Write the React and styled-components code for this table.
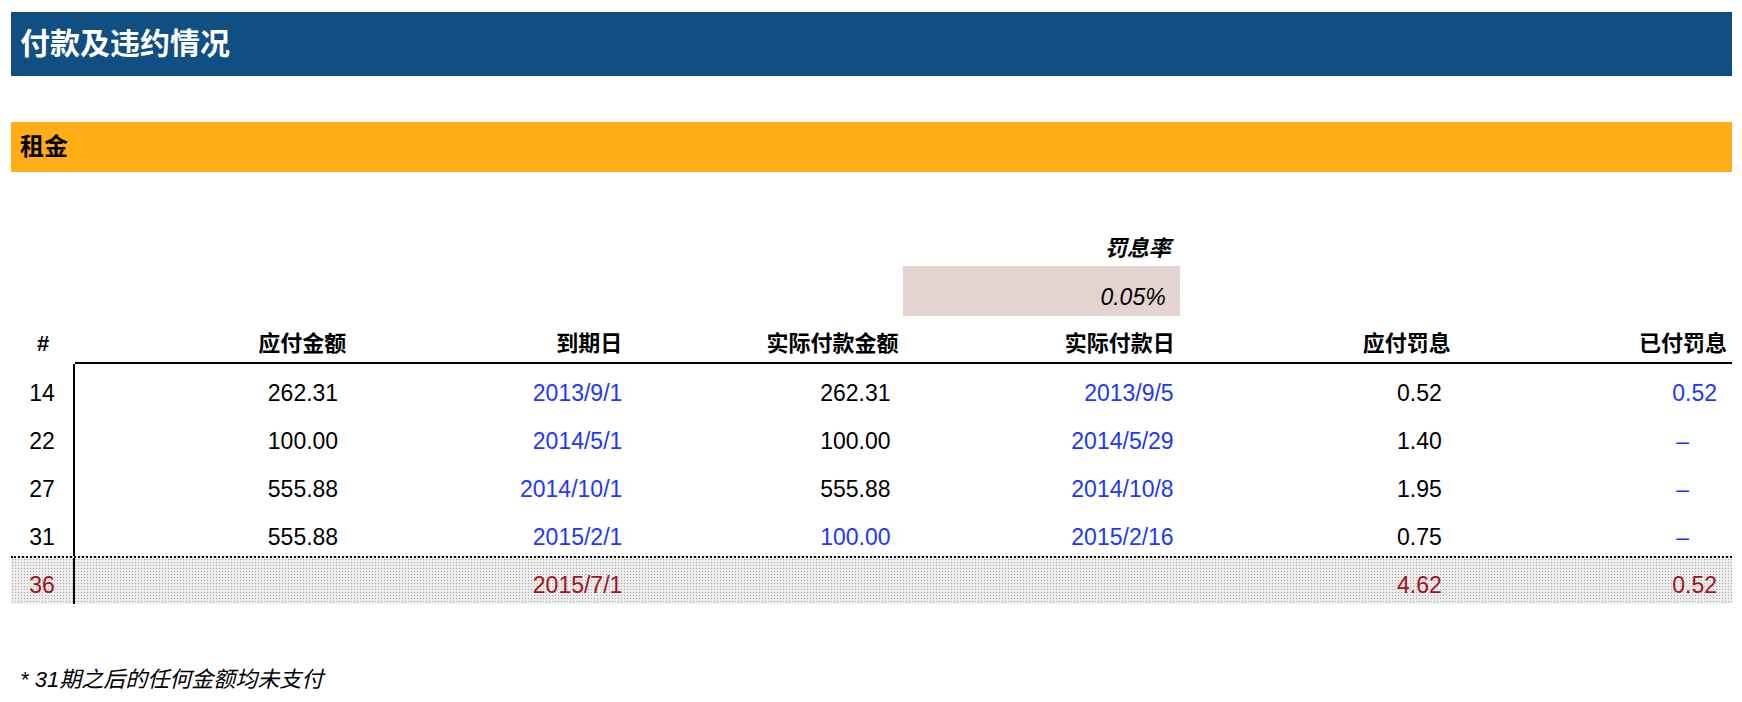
import React from "react";
import styled, { createGlobalStyle } from "styled-components";

const Global = createGlobalStyle`
  html, body { margin: 0; padding: 0; background: #ffffff; }
  body {
    font-family: "Liberation Sans", "Noto Sans CJK SC", sans-serif;
    color: #000;
  }
`;

const Page = styled.div`
  padding: 12px 10px 0 11px;
  width: 1721px;
`;

const TitleBar = styled.div`
  height: 64px;
  background: #114f82;
  display: flex;
  align-items: center;
  padding-left: 9px;
  color: #ffffff;
  font-size: 30px;
  font-weight: 700;
  line-height: 1;
`;

const SectionBar = styled.div`
  margin-top: 46px;
  height: 50px;
  background: #ffae18;
  display: flex;
  align-items: center;
  padding-left: 9px;
  font-size: 24px;
  font-weight: 700;
  line-height: 1;
`;

const Table = styled.div`
  margin-top: 56px;
  display: flex;
  flex-direction: column;
`;

const Row = styled.div`
  display: grid;
  grid-template-columns: 64px repeat(6, 1fr);
  height: ${(p) => p.$h}px;
  ${(p) =>
    p.$total &&
    `
    border-top: 2px dotted #111;
    background-color: #ececec;
    background-image: radial-gradient(circle, #a9a9a9 0.7px, transparent 0.9px);
    background-size: 3px 3px;
  `}
`;

const Cell = styled.div`
  display: flex;
  align-items: flex-end;
  justify-content: ${(p) => (p.$center ? "center" : "flex-end")};
  padding-right: ${(p) => (p.$center ? 0 : p.$pr ?? 5)}px;
  padding-bottom: ${(p) => p.$pb ?? 6}px;
  font-size: ${(p) => (p.$bold ? 22 : 23)}px;
  line-height: 26px;
  white-space: nowrap;
  font-weight: ${(p) => (p.$bold ? 700 : 400)};
  font-style: ${(p) => (p.$italic ? "italic" : "normal")};
  color: ${(p) =>
    p.$tone === "blue" ? "#1d38f6" : p.$tone === "red" ? "#a3121f" : "#000"};
  background: ${(p) => (p.$fill ? "#e3d3d1" : "transparent")};
  border-bottom: ${(p) => (p.$underline ? "2px solid #000" : "none")};
  border-right: ${(p) => (p.$divider ? "2px solid #000" : "none")};
  box-sizing: border-box;
`;

const Footnote = styled.div`
  margin-top: 63px;
  padding-left: 9px;
  font-size: 22px;
  line-height: 26px;
  font-style: italic;
`;

const headers = ["应付金额", "到期日", "实际付款金额", "实际付款日", "应付罚息", "已付罚息"];

const rows = [
  { n: "14", due: "262.31", date: "2013/9/1", paid: "262.31", paidBlue: false, pdate: "2013/9/5", pen: "0.52", ppen: "0.52" },
  { n: "22", due: "100.00", date: "2014/5/1", paid: "100.00", paidBlue: false, pdate: "2014/5/29", pen: "1.40", ppen: null },
  { n: "27", due: "555.88", date: "2014/10/1", paid: "555.88", paidBlue: false, pdate: "2014/10/8", pen: "1.95", ppen: null },
  { n: "31", due: "555.88", date: "2015/2/1", paid: "100.00", paidBlue: true, pdate: "2015/2/16", pen: "0.75", ppen: null },
];

export default function App() {
  return (
    <>
      <Global />
      <Page>
        <TitleBar>付款及违约情况</TitleBar>
        <SectionBar>租金</SectionBar>
        <Table>
          <Row $h={38}>
            <Cell />
            <Cell />
            <Cell />
            <Cell />
            <Cell $bold $italic $pb={4} $pr={9}>罚息率</Cell>
            <Cell />
            <Cell />
          </Row>
          <Row $h={50}>
            <Cell />
            <Cell />
            <Cell />
            <Cell />
            <Cell $fill $italic $pr={14}>0.05%</Cell>
            <Cell />
            <Cell />
          </Row>
          <Row $h={48}>
            <Cell $center $bold $pb={7}>#</Cell>
            {headers.map((h) => (
              <Cell key={h} $bold $underline $pb={5}>
                {h}
              </Cell>
            ))}
          </Row>
          {rows.map((r) => (
            <Row key={r.n} $h={48}>
              <Cell $center $divider>{r.n}</Cell>
              <Cell $pr={13}>{r.due}</Cell>
              <Cell $tone="blue" $pr={5}>{r.date}</Cell>
              <Cell $pr={13} $tone={r.paidBlue ? "blue" : undefined}>{r.paid}</Cell>
              <Cell $tone="blue" $pr={6}>{r.pdate}</Cell>
              <Cell $pr={14}>{r.pen}</Cell>
              {r.ppen ? (
                <Cell $tone="blue" $pr={15}>{r.ppen}</Cell>
              ) : (
                <Cell $tone="blue" $pr={43}>–</Cell>
              )}
            </Row>
          ))}
          <Row $h={46} $total>
            <Cell $center $divider $tone="red">36</Cell>
            <Cell />
            <Cell $tone="red" $pr={5}>2015/7/1</Cell>
            <Cell />
            <Cell />
            <Cell $tone="red" $pr={14}>4.62</Cell>
            <Cell $tone="red" $pr={15}>0.52</Cell>
          </Row>
        </Table>
        <Footnote>* 31期之后的任何金额均未支付</Footnote>
      </Page>
    </>
  );
}
